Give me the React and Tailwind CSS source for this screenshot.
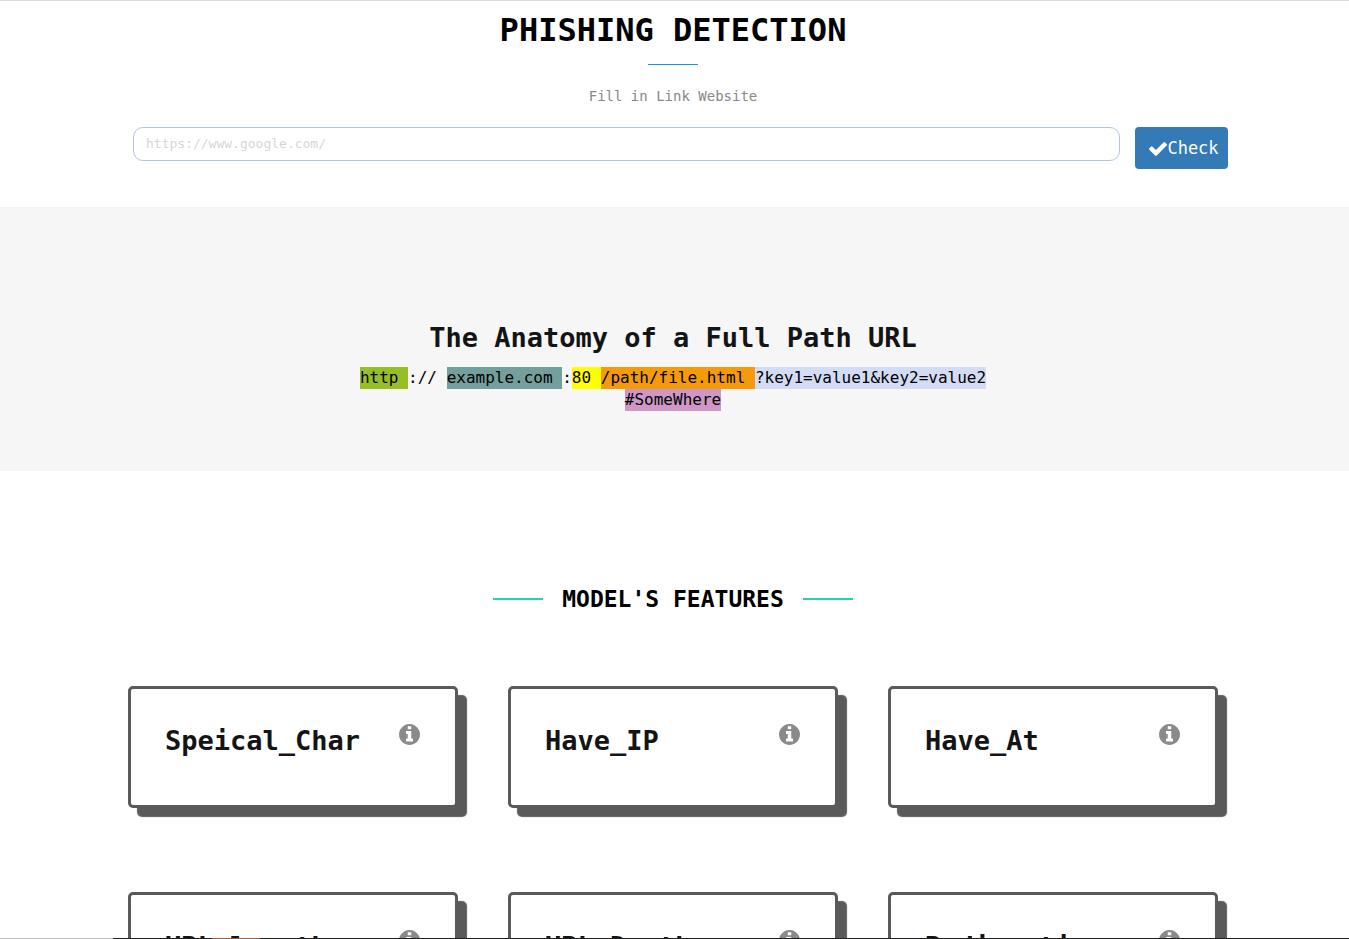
import React, { useState } from "react";

const FEATURES = [
  "Speical_Char",
  "Have_IP",
  "Have_At",
  "URL_length",
  "URL_Depth",
  "Redirection",
];

const URL_PARTS = [
  { text: "http ", className: "bg-[#96be25]" },
  { text: ":// ", className: "" },
  { text: "example.com ", className: "bg-[#739f9d]" },
  { text: ":", className: "" },
  { text: "80 ", className: "bg-[#ffff00]" },
  { text: "/path/file.html ", className: "bg-[#f59b0a]" },
  { text: "?key1=value1&key2=value2", className: "bg-[#d3dcf5]" },
];

function CheckIcon({ className }) {
  return (
    <svg className={className} viewBox="121 334 1550 1188" fill="currentColor" aria-hidden="true">
      <path d="M1671 566q0 40-28 68l-724 724-136 136q-28 28-68 28t-68-28l-136-136-362-362q-28-28-28-68t28-68l136-136q28-28 68-28t68 28l294 295 656-657q28-28 68-28t68 28l136 136q28 28 28 68z" />
    </svg>
  );
}

function InfoIcon({ className }) {
  return (
    <svg className={className} viewBox="128 128 1536 1536" fill="currentColor" aria-hidden="true">
      <path d="M1152 1376v-160q0-14-9-23t-23-9h-96v-512q0-14-9-23t-23-9h-320q-14 0-23 9t-9 23v160q0 14 9 23t23 9h96v320h-96q-14 0-23 9t-9 23v160q0 14 9 23t23 9h448q14 0 23-9t9-23zm-128-896v-160q0-14-9-23t-23-9h-192q-14 0-23 9t-9 23v160q0 14 9 23t23 9h192q14 0 23-9t9-23zm640 416q0 209-103 385.5t-279.5 279.5-385.5 103-385.5-103-279.5-279.5-103-385.5 103-385.5 279.5-279.5 385.5-103 385.5 103 279.5 279.5 103 385.5z" />
    </svg>
  );
}

/** Title, link field and check button */
function CheckForm() {
  const [link, setLink] = useState("");

  return (
    <section className="border-t border-[#dcdce0] pr-[3px] pb-[38px]">
      <h1 className="pt-[9px] text-center text-[32px] leading-10 font-bold text-black">
        PHISHING DETECTION
      </h1>
      <div className="mx-auto mt-[14px] h-px w-[50px] bg-[#1490e6]" />
      <label
        htmlFor="link"
        className="mt-[21px] block text-center text-sm leading-5 text-[#888888]"
      >
        Fill in Link Website
      </label>
      <form
        className="mx-auto mt-[21px] flex max-w-[1110px] items-start gap-[15px] pl-[15px]"
        onSubmit={(e) => e.preventDefault()}
      >
        <input
          id="link"
          type="text"
          value={link}
          onChange={(e) => setLink(e.target.value)}
          placeholder="https://www.google.com/"
          className="h-[34px] min-w-0 flex-1 rounded-[10px] border border-[#b0c4de] bg-white px-3 pb-[2px] text-[13px] text-[#555555] outline-none placeholder:text-[#d6d6d6]"
        />
        <button
          type="submit"
          className="flex h-[42px] w-[93px] items-center justify-center rounded bg-[#337ab7] pt-px pl-[5px] text-[17px] text-white"
        >
          <CheckIcon className="h-[14px] w-[18px] shrink-0" />
          Check
        </button>
      </form>
    </section>
  );
}

/** Coloured breakdown of a URL */
function UrlAnatomy() {
  return (
    <section className="bg-[#f6f6f6] pt-[115px] pr-[3px] pb-[60px] text-center">
      <h2 className="text-[27px] leading-8 font-bold text-[#141414]">
        The Anatomy of a Full Path URL
      </h2>
      <p className="mt-[13px] text-base leading-[22px] text-black">
        {URL_PARTS.map((part) => (
          <span
            key={part.text}
            className={`inline-block align-top whitespace-pre ${part.className}`}
          >
            {part.text}
          </span>
        ))}
        <br />
        <span className="inline-block bg-[#cf97c5] align-top">#SomeWhere</span>
      </p>
    </section>
  );
}

function FeatureCard({ name }) {
  return (
    <article className="flex h-[122px] items-start justify-between rounded-[5px] border-[3px] border-[#5a5a5a] bg-white pt-[34px] pr-[35px] pl-[34px] shadow-[9px_9px_1px_#5a5a5a]">
      <h3 className="text-[27px] leading-9 font-bold text-[#141414]">{name}</h3>
      <button type="button" aria-label={`About ${name}`} className="mt-px text-[#8a8a8a]">
        <InfoIcon className="size-[21px]" />
      </button>
    </article>
  );
}

function Features() {
  return (
    <section className="pt-[112px] pr-[3px]">
      <div className="flex items-center justify-center gap-[19px]">
        <span className="h-[2px] w-[50px] bg-[#28d2ae]" />
        <h2 className="text-[23px] leading-8 font-bold text-black">MODEL'S FEATURES</h2>
        <span className="h-[2px] w-[50px] bg-[#28d2ae]" />
      </div>
      <div className="mx-auto mt-[71px] grid max-w-[1090px] grid-cols-3 gap-x-[50px] gap-y-[84px]">
        {FEATURES.map((name) => (
          <FeatureCard key={name} name={name} />
        ))}
      </div>
    </section>
  );
}

export default function App() {
  return (
    <div className="flex h-screen flex-col bg-white font-['DejaVu_Sans_Mono',monospace]">
      <main className="min-h-0 flex-1 overflow-hidden">
        <CheckForm />
        <UrlAnatomy />
        <Features />
      </main>
      {/* Bottom strip */}
      <div className="flex h-px shrink-0 bg-[#202020]">
        <span className="w-[113px] bg-[#c0c0c0]" />
        <span className="ml-[99px] w-12 bg-[#a0643c]" />
      </div>
    </div>
  );
}
